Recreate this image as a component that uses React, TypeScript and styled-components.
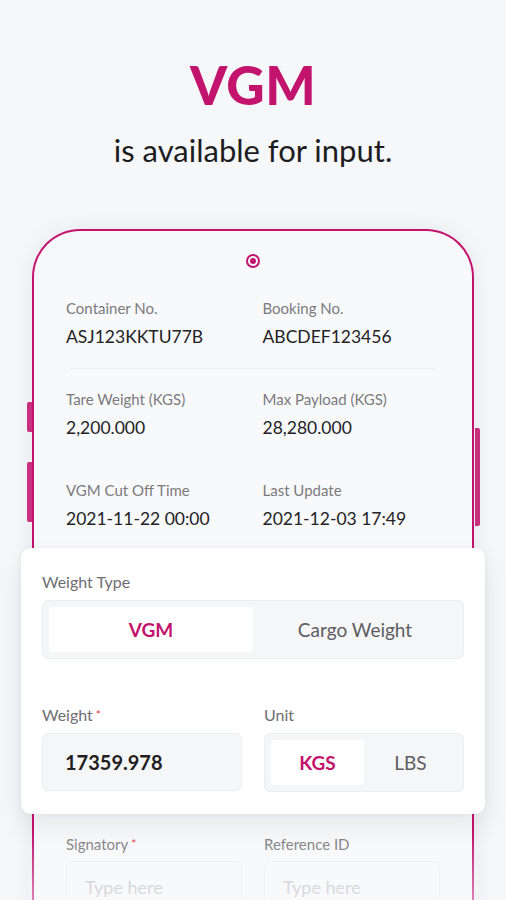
import React from "react";
import styled, { createGlobalStyle } from "styled-components";

const GlobalStyle = createGlobalStyle`
  html, body {
    margin: 0;
    padding: 0;
    background: #f6f7f9;
    font-family: "Lato", "Liberation Sans", sans-serif;
    -webkit-font-smoothing: antialiased;
  }
  body {
    height: 900px;
    overflow: hidden;
  }
`;

const MAGENTA = "#c2136d";

const Page = styled.div`
  width: 506px;
  height: 900px;
  overflow: hidden;
`;

const Header = styled.header`
  padding-top: 55px;
  text-align: center;
`;

const Title = styled.h1`
  margin: 0;
  font-size: 53px;
  line-height: 60px;
  font-weight: 900;
  color: ${MAGENTA};
  letter-spacing: 0.5px;
`;

const Subtitle = styled.p`
  margin: 15px 0 0;
  font-size: 31px;
  line-height: 40px;
  font-weight: 400;
  color: #1d1d1f;
`;

const Phone = styled.div`
  position: relative;
  margin: 59px 32px 0;
  height: 720px;
  border: 2.5px solid ${MAGENTA};
  border-bottom: none;
  border-radius: 48px 48px 0 0;
  background: #f8f9fb;
  box-shadow: 0 0 24px rgba(30, 30, 60, 0.07);
  &::after {
    content: "";
    position: absolute;
    left: -6px;
    right: -6px;
    top: 600px;
    height: 80px;
    background: linear-gradient(rgba(248, 249, 251, 0), rgba(248, 249, 251, 0.55));
    pointer-events: none;
  }
`;

const SideButton = styled.span<{ $side: "left" | "right"; $top: number; $h: number }>`
  position: absolute;
  top: ${(p) => p.$top}px;
  height: ${(p) => p.$h}px;
  width: 5px;
  ${(p) => (p.$side === "left" ? "left: -7px;" : "right: -8px;")}
  background: #c92f7f;
  border-radius: ${(p) => (p.$side === "left" ? "2px 0 0 2px" : "0 2px 2px 0")};
`;

const Camera = styled.div`
  margin: 23px auto 0;
  width: 14px;
  height: 14px;
  box-sizing: border-box;
  border: 2px solid ${MAGENTA};
  border-radius: 50%;
  display: flex;
  align-items: center;
  justify-content: center;
  &::before {
    content: "";
    width: 6px;
    height: 6px;
    border-radius: 50%;
    background: ${MAGENTA};
  }
`;

const Screen = styled.div`
  padding: 30px 32px 0;
`;

const InfoGrid = styled.div<{ $gap: number }>`
  display: grid;
  grid-template-columns: 1fr 1fr;
  column-gap: 19px;
  margin-top: ${(p) => p.$gap}px;
`;

const Field = styled.div`
  display: flex;
  flex-direction: column;
`;

const Label = styled.span`
  font-size: 15px;
  line-height: 20px;
  color: #7b7b7e;
`;

const Value = styled.span`
  margin-top: 7px;
  font-size: 17.5px;
  line-height: 24px;
  color: #232326;
`;

const Divider = styled.hr`
  margin: 19px 5px 0;
  border: none;
  border-top: 1.5px dotted #e2e3e6;
`;

const Card = styled.section`
  margin: 17px -45px 0;
  padding: 24px 21px 22px;
  background: #ffffff;
  border-radius: 10px;
  box-shadow: 0 12px 28px rgba(20, 20, 40, 0.08), 0 0 6px rgba(20, 20, 40, 0.04);
`;

const CardLabel = styled.div`
  font-size: 16px;
  line-height: 20px;
  color: #6e6e72;
`;

const Required = styled.span`
  color: #e0333c;
  font-size: 12px;
  vertical-align: top;
  margin-left: 3px;
`;

const Segmented = styled.div`
  margin-top: 8px;
  display: flex;
  height: 59px;
  box-sizing: border-box;
  padding: 6px;
  background: #f5f6f8;
  border: 1px solid #eceef1;
  border-radius: 6px;
`;

const Segment = styled.div<{ $active?: boolean }>`
  flex: 1;
  display: flex;
  align-items: center;
  justify-content: center;
  border-radius: 4px;
  font-size: 19px;
  background: ${(p) => (p.$active ? "#ffffff" : "transparent")};
  color: ${(p) => (p.$active ? MAGENTA : "#5d5d61")};
  font-weight: ${(p) => (p.$active ? 700 : 400)};
`;

const FormRow = styled.div`
  margin-top: 46px;
  display: grid;
  grid-template-columns: 1fr 1fr;
  column-gap: 22px;
`;

const InputBox = styled.div`
  margin-top: 8px;
  height: 58px;
  box-sizing: border-box;
  display: flex;
  align-items: center;
  padding-left: 22px;
  background: #f5f6f8;
  border: 1px solid #eceef1;
  border-radius: 6px;
  font-size: 20px;
  font-weight: 700;
  color: #1f1f22;
`;

const LowerRow = styled.div`
  margin-top: 20px;
  display: grid;
  grid-template-columns: 1fr 1fr;
  column-gap: 22px;
`;

const Placeholder = styled.div`
  margin-top: 7px;
  height: 58px;
  box-sizing: border-box;
  padding: 14px 0 0 18px;
  border: 1px solid #eeeff2;
  border-radius: 6px;
  font-size: 18px;
  color: #c3c4c8;
`;

const info = [
  [
    ["Container No.", "ASJ123KKTU77B"],
    ["Booking No.", "ABCDEF123456"],
  ],
  [
    ["Tare Weight (KGS)", "2,200.000"],
    ["Max Payload (KGS)", "28,280.000"],
  ],
  [
    ["VGM Cut Off Time", "2021-11-22 00:00"],
    ["Last Update", "2021-12-03 17:49"],
  ],
];

export default function App() {
  return (
    <Page>
      <GlobalStyle />
      <Header>
        <Title>VGM</Title>
        <Subtitle>is available for input.</Subtitle>
      </Header>
      <Phone>
        <SideButton $side="left" $top={171} $h={30} />
        <SideButton $side="left" $top={231} $h={60} />
        <SideButton $side="right" $top={197} $h={98} />
        <Camera />
        <Screen>
          {info.map((row, i) => (
            <React.Fragment key={i}>
              <InfoGrid $gap={i === 0 ? 0 : i === 1 ? 20 : 40}>
                {row.map(([l, v]) => (
                  <Field key={l}>
                    <Label>{l}</Label>
                    <Value>{v}</Value>
                  </Field>
                ))}
              </InfoGrid>
              {i === 0 && <Divider />}
            </React.Fragment>
          ))}
          <Card>
            <CardLabel>Weight Type</CardLabel>
            <Segmented>
              <Segment $active>VGM</Segment>
              <Segment>Cargo Weight</Segment>
            </Segmented>
            <FormRow>
              <div>
                <CardLabel>
                  Weight<Required>*</Required>
                </CardLabel>
                <InputBox>17359.978</InputBox>
              </div>
              <div>
                <CardLabel>Unit</CardLabel>
                <Segmented>
                  <Segment $active>KGS</Segment>
                  <Segment>LBS</Segment>
                </Segmented>
              </div>
            </FormRow>
          </Card>
          <LowerRow>
            <Field>
              <Label>
                Signatory<Required>*</Required>
              </Label>
              <Placeholder>Type here</Placeholder>
            </Field>
            <Field>
              <Label>Reference ID</Label>
              <Placeholder>Type here</Placeholder>
            </Field>
          </LowerRow>
        </Screen>
      </Phone>
    </Page>
  );
}
